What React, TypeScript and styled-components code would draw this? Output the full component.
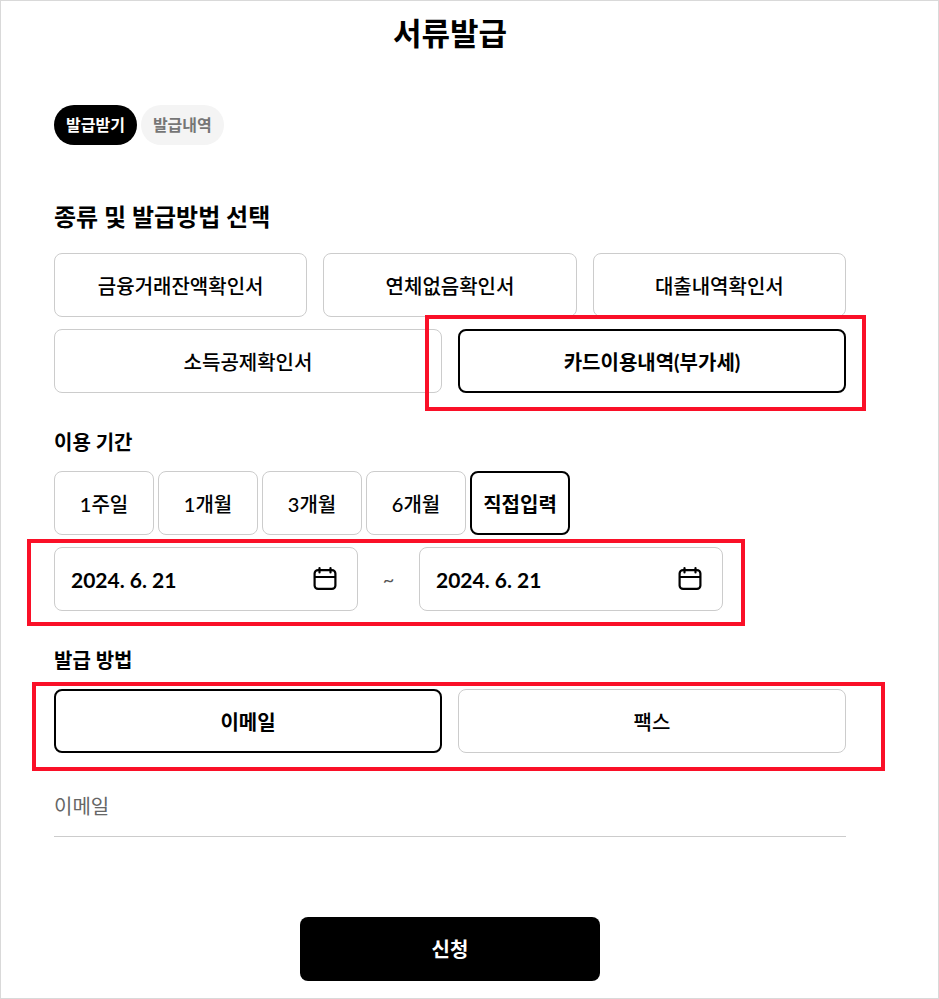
import React, { useState } from "react";
import styled, { createGlobalStyle, css } from "styled-components";

const GlobalStyle = createGlobalStyle`
  *, *::before, *::after { box-sizing: border-box; }
  body {
    margin: 0;
    background: #fff;
    color: #000;
    font-family: Lato, "Noto Sans CJK KR", sans-serif;
  }
  button, input { font-family: inherit; color: inherit; }
`;

const Page = styled.main`
  min-height: 100vh;
  border: 1px solid #d9d9d9;
  padding: 8px 92px 17px 53px;
`;

const Title = styled.h1`
  margin: 0 0 48px;
  font-size: 31px;
  line-height: 48px;
  font-weight: 700;
  text-align: center;
`;

const Tabs = styled.nav`
  display: flex;
  gap: 4px;
  margin-bottom: 56px;
`;

const Tab = styled.button<{ $active: boolean }>`
  height: 40px;
  padding: 0 12px 3px;
  border: 0;
  border-radius: 20px;
  font-size: 16px;
  font-weight: 700;
  background: ${(p) => (p.$active ? "#000" : "#f4f4f4")};
  color: ${(p) => (p.$active ? "#fff" : "#767676")};
`;

const SectionTitle = styled.h2`
  margin: 0 0 20px;
  font-size: 24px;
  line-height: 32px;
  font-weight: 700;
`;

const GroupTitle = styled.h3`
  margin: 0;
  font-size: 20px;
  line-height: 28px;
  font-weight: 700;
`;

const Group = styled.section`
  display: flex;
  flex-direction: column;
  gap: 15px;
  margin-top: 35px;
`;

const OptionRow = styled.div<{ $columns: number }>`
  position: relative;
  display: grid;
  grid-template-columns: repeat(${(p) => p.$columns}, minmax(0, 1fr));
  gap: 16px;
`;

const Rows = styled.div`
  display: flex;
  flex-direction: column;
  gap: 12px;
`;

const PeriodRow = styled.div`
  display: flex;
  gap: 4px;
`;

const field = css`
  height: 64px;
  border: 1px solid #ccc;
  border-radius: 8px;
  background: #fff;
`;

const Option = styled.button<{ $active: boolean }>`
  ${field}
  padding: 0;
  font-size: 20px;
  font-weight: ${(p) => (p.$active ? 700 : 500)};
  ${(p) => p.$active && "border: 2px solid #000;"}
`;

const PeriodOption = styled(Option)`
  flex: 0 1 100px;
`;

const Marked = styled.div`
  position: relative;
  display: grid;
`;

const Mark = styled.div<{ $inset: string }>`
  position: absolute;
  inset: ${(p) => p.$inset};
  border: 4px solid #fa1028;
  pointer-events: none;
`;

const DateRow = styled.div`
  position: relative;
  display: flex;
  align-items: center;
  width: 669px;
  max-width: 100%;
`;

const DateField = styled.label`
  ${field}
  flex: 1 1 0;
  min-width: 0;
  display: flex;
  align-items: center;
  padding: 0 20px 0 16px;
`;

const DateInput = styled.input`
  flex: 1;
  min-width: 0;
  padding: 0;
  border: 0;
  outline: 0;
  font-size: 21px;
  font-weight: 700;
  background: transparent;
`;

const Tilde = styled.span`
  flex: 0 0 61px;
  text-align: center;
  font-size: 20px;
  color: #555;
`;

const EmailInput = styled.input`
  width: 100%;
  height: 60px;
  margin-top: 24px;
  padding: 0 0 2px;
  border: 0;
  border-bottom: 1px solid #ccc;
  outline: 0;
  font-size: 20px;
  background: transparent;
  &::placeholder { color: #666; opacity: 1; }
`;

const Submit = styled.button`
  display: block;
  width: 300px;
  height: 64px;
  margin: 80px auto 0;
  padding: 0 0 2px;
  border: 0;
  border-radius: 8px;
  background: #000;
  color: #fff;
  font-size: 20px;
  font-weight: 700;
`;

const CalendarIcon = () => (
  <svg width="24" height="26" viewBox="0 0 24 26" fill="none" stroke="#000" strokeWidth="2.2" strokeLinecap="round" aria-hidden="true">
    <rect x="1.6" y="4.1" width="20.8" height="18.8" rx="3.5" />
    <path d="M2 11h20M6.5 2v4.5M17.5 2v4.5" />
  </svg>
);

const firstKinds = ["금융거래잔액확인서", "연체없음확인서", "대출내역확인서"];
const deduction = "소득공제확인서";
const cardUsage = "카드이용내역(부가세)";
const periods = ["1주일", "1개월", "3개월", "6개월", "직접입력"];

export default function App() {
  const [tab, setTab] = useState("발급받기");
  const [kind, setKind] = useState(cardUsage);
  const [period, setPeriod] = useState("직접입력");
  const [method, setMethod] = useState("이메일");

  return (
    <>
      <GlobalStyle />
      <Page>
        <Title>서류발급</Title>
        <Tabs>
          {["발급받기", "발급내역"].map((t) => (
            <Tab key={t} type="button" $active={tab === t} onClick={() => setTab(t)}>{t}</Tab>
          ))}
        </Tabs>
        <SectionTitle>종류 및 발급방법 선택</SectionTitle>
        <Rows>
          <OptionRow $columns={3}>
            {firstKinds.map((k) => (
              <Option key={k} type="button" $active={kind === k} onClick={() => setKind(k)}>{k}</Option>
            ))}
          </OptionRow>
          <OptionRow $columns={2}>
            <Option type="button" $active={kind === deduction} onClick={() => setKind(deduction)}>{deduction}</Option>
            <Marked>
              <Option type="button" $active={kind === cardUsage} onClick={() => setKind(cardUsage)}>{cardUsage}</Option>
              <Mark $inset="-14px -20px -18px -33px" />
            </Marked>
          </OptionRow>
        </Rows>
        <Group>
          <GroupTitle>이용 기간</GroupTitle>
          <Rows>
            <PeriodRow>
              {periods.map((p) => (
                <PeriodOption key={p} type="button" $active={period === p} onClick={() => setPeriod(p)}>{p}</PeriodOption>
              ))}
            </PeriodRow>
            <DateRow>
              <DateField>
                <DateInput aria-label="시작일" defaultValue="2024. 6. 21" />
                <CalendarIcon />
              </DateField>
              <Tilde>~</Tilde>
              <DateField>
                <DateInput aria-label="종료일" defaultValue="2024. 6. 21" />
                <CalendarIcon />
              </DateField>
              <Mark $inset="-8px -22px -15px -27px" />
            </DateRow>
          </Rows>
        </Group>
        <Group>
          <GroupTitle>발급 방법</GroupTitle>
          <OptionRow $columns={2}>
            {["이메일", "팩스"].map((m) => (
              <Option key={m} type="button" $active={method === m} onClick={() => setMethod(m)}>{m}</Option>
            ))}
            <Mark $inset="-7px -39px -18px -22px" />
          </OptionRow>
        </Group>
        <EmailInput type="email" aria-label="이메일" placeholder="이메일" />
        <Submit type="button">신청</Submit>
      </Page>
    </>
  );
}
